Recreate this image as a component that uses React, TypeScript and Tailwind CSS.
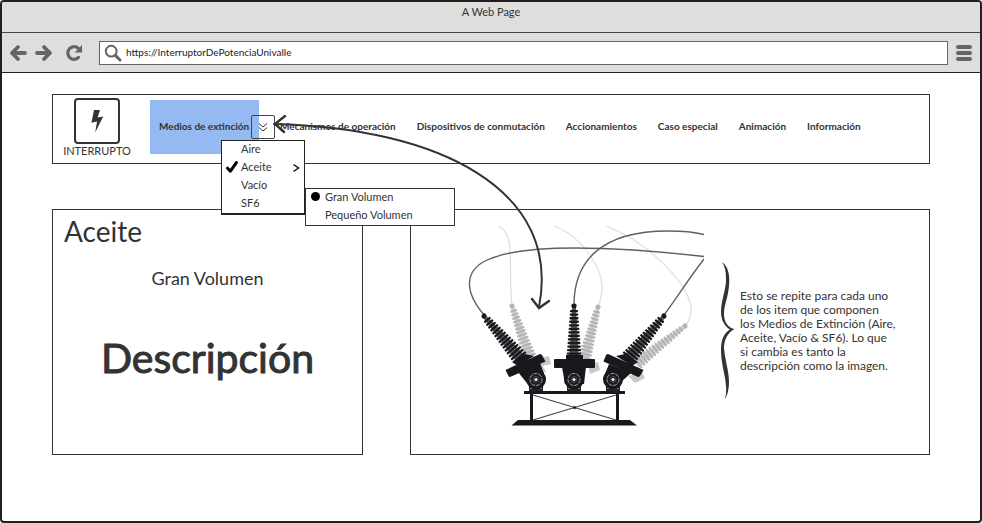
import React from "react";

const NAV_LINKS = [
  "Mecanismos de operación",
  "Dispositivos de conmutación",
  "Accionamientos",
  "Caso especial",
  "Animación",
  "Información",
];

function Toolbar() {
  return (
    <div className="flex h-10 items-center border-b border-[#231f20] bg-[#dededc] pr-2 pl-[7px] text-[#656565]">
      <button type="button" aria-label="Atrás" className="mr-2 h-[18px] w-[18px]">
        <svg viewBox="0 0 18 18" width="18" height="18" fill="none" stroke="currentColor" strokeWidth="3.8" strokeLinecap="round" strokeLinejoin="round">
          <path d="M9 3 L3 9 L9 15" />
          <path d="M4 9 H16" />
        </svg>
      </button>
      <button type="button" aria-label="Adelante" className="mr-3 h-[18px] w-[18px]">
        <svg viewBox="0 0 18 18" width="18" height="18" fill="none" stroke="currentColor" strokeWidth="3.8" strokeLinecap="round" strokeLinejoin="round">
          <path d="M9 3 L15 9 L9 15" />
          <path d="M14 9 H2" />
        </svg>
      </button>
      <button type="button" aria-label="Recargar" className="mr-4 h-[18px] w-[18px]">
        <svg viewBox="0 0 18 18" width="18" height="18" fill="none">
          <path d="M13.6 13.4 A6.3 6.3 0 1 1 13.4 4.4" stroke="currentColor" strokeWidth="3.2" strokeLinecap="round" />
          <path d="M17 1 V8.4 H9.6 Z" fill="currentColor" />
        </svg>
      </button>
      <label className="flex h-6 flex-1 items-center border border-[#656565] bg-white pl-1">
        <svg viewBox="0 0 18 18" width="18" height="18" fill="none" stroke="#656565" strokeLinecap="round">
          <circle cx="7.2" cy="7.2" r="5.4" strokeWidth="2" />
          <path d="M11.6 11.6 L16 16" strokeWidth="3" />
        </svg>
        <input
          type="text"
          aria-label="Dirección"
          defaultValue="https://InterruptorDePotenciaUnivalle"
          className="ml-1 h-5 flex-1 bg-transparent pb-0.5 text-[10px] text-[#222222] outline-none"
        />
      </label>
      <button type="button" aria-label="Menú" className="ml-2 flex w-4 flex-col gap-0.5">
        <span className="h-1 rounded-full bg-[#656565]" />
        <span className="h-1 rounded-full bg-[#656565]" />
        <span className="h-1 rounded-full bg-[#656565]" />
      </button>
    </div>
  );
}

function MediosMenu() {
  return (
    <>
      <ul className="absolute top-10 left-[71px] z-20 w-[84px] border border-b-2 border-[#222222] bg-white text-[11px] leading-4 font-normal text-[#333333]">
        <li className="h-[18px] pl-[19px]"><button type="button">Aire</button></li>
        <li className="flex h-[18px] items-start pr-1 pl-1">
          <svg viewBox="0 0 12 12" width="12" height="12" fill="none" stroke="#000000" strokeWidth="3" strokeLinecap="round" strokeLinejoin="round" className="mt-0.5 mr-[3px]">
            <path d="M1.6 7.2 L4.4 10.2 L10.4 1.6" />
          </svg>
          <button type="button" className="flex-1 text-left">Aceite</button>
          <svg viewBox="0 0 8 10" width="8" height="10" fill="none" stroke="#111111" strokeWidth="1.5" className="mt-1">
            <path d="M1.5 1.5 L6.5 5 L1.5 8.5" />
          </svg>
        </li>
        <li className="h-[18px] pl-[19px]"><button type="button">Vacío</button></li>
        <li className="h-[18px] pl-[19px]"><button type="button">SF6</button></li>
      </ul>
      <ul className="absolute top-[88px] left-[155px] z-20 w-[150px] border border-[#333333] bg-white text-[11px] leading-4 font-normal text-[#333333]">
        <li className="flex h-[18px] items-start pl-[5px]">
          <span className="mt-[3px] mr-[5px] h-[9px] w-[9px] rounded-full bg-black" />
          <button type="button">Gran Volumen</button>
        </li>
        <li className="h-[18px] pl-[19px]"><button type="button">Pequeño Volumen</button></li>
      </ul>
    </>
  );
}

function NavBar() {
  return (
    <header className="flex h-[70px] items-start border border-[#333333] pl-[11px]">
      <div className="mt-[3px] flex w-[66px] flex-col items-center text-[11px] leading-[14px] text-[#333333]">
        <div className="flex h-[46px] w-[46px] items-center justify-center rounded border-2 border-[#333333]">
          <svg viewBox="0 0 14 24" width="14" height="24" fill="#333333">
            <path d="M4 1 H10 L7.6 8.4 L13.2 7.4 L5.2 23.4 L7 12.6 L1.4 13.8 Z" />
          </svg>
        </div>
        INTERRUPTO
      </div>
      <nav className="mt-[5px] ml-5 text-[10px] font-bold text-[#333333]">
        <ul className="flex h-[54px] items-center gap-[21px] whitespace-nowrap">
          <li className="relative flex h-[54px] w-[109px] items-center bg-[#95baf2] pl-[9px]">
            <a href="#medios" className="pb-0.5">Medios de extinción</a>
            <button
              type="button"
              aria-label="Abrir menú"
              className="absolute top-[15px] left-[101px] flex h-6 w-6 items-center justify-center rounded-xs border border-[#444444]"
            >
              <svg viewBox="0 0 10 10" width="10" height="10" fill="none" stroke="#333333" strokeWidth="1">
                <path d="M1 1.5 L5 5 L9 1.5 M1 5.5 L5 9 L9 5.5" />
              </svg>
            </button>
            <MediosMenu />
          </li>
          {NAV_LINKS.map((label) => (
            <li key={label} className="pb-0.5"><a href="#seccion">{label}</a></li>
          ))}
        </ul>
      </nav>
    </header>
  );
}

type StackProps = {
  x1: number;
  y1: number;
  x2: number;
  y2: number;
  from: number;
  to: number;
  color: string;
  core: string;
};

/* Tapered insulator: a core with evenly spaced discs that widen towards the base. */
function Insulator({ x1, y1, x2, y2, from, to, color, core }: StackProps) {
  const length = Math.hypot(x2 - x1, y2 - y1);
  const angle = (Math.atan2(y2 - y1, x2 - x1) * 180) / Math.PI - 90;
  const count = Math.floor(length / 3.7);
  return (
    <g transform={`translate(${x1} ${y1}) rotate(${angle})`} fill={color}>
      <path d={`M-1.8 0 H1.8 L${to / 3.2} ${length} H${-to / 3.2} Z`} fill={core} />
      <ellipse cx="0" cy="0" rx="2.6" ry="2.4" />
      {Array.from({ length: count }, (_, i) => {
        const y = 4 + (i * (length - 4)) / count;
        const w = from + ((to - from) * i) / count;
        return <rect key={i} x={-w / 2} y={y} width={w} height="2.3" rx="0.8" />;
      })}
    </g>
  );
}

function Joint({ cx }: { cx: number }) {
  return (
    <g>
      <path d={`M${cx - 7} 386 H${cx + 7} V392 H${cx - 7} Z`} fill="#26242a" />
      <path d={`M${cx - 6} 388.5 H${cx + 6}`} stroke="#99979b" strokeWidth="0.8" />
      <circle cx={cx} cy="379.5" r="10" fill="#19181d" />
      <circle cx={cx} cy="379.5" r="6" fill="none" stroke="#a5a3a7" strokeWidth="1" strokeDasharray="4 1" />
      <circle cx={cx} cy="379.5" r="3" fill="none" stroke="#5b595e" strokeWidth="0.8" />
      <circle cx={cx} cy="379.5" r="1.5" fill="#ffffff" />
    </g>
  );
}

function Breaker() {
  const dark = "#19181d";
  const pale = "#b4b4b4";
  const darkCore = "#5c5a5f";
  const paleCore = "#d0d0d0";
  return (
    <svg viewBox="466 226 238 200" width="238" height="200" role="img" aria-label="Interruptor de potencia" className="shrink-0">
      <g fill="none" stroke="#dddddd" strokeWidth="1.2">
        <path d="M498 226 C507 230 509 238 510 250 C511 270 510 288 512 306" />
        <path d="M554 226 C582 236 604 270 602 290 Q601 300 598 307" />
        <path d="M606 226 C650 243 686 282 691 306 Q692 318 685 326" />
      </g>
      <Insulator x1={512} y1={306} x2={530} y2={358} from={7} to={14} color={pale} core={paleCore} />
      <Insulator x1={598} y1={307} x2={584} y2={360} from={7} to={14} color={pale} core={paleCore} />
      <Insulator x1={685} y1={326} x2={636} y2={364} from={6} to={14} color={pale} core={paleCore} />
      <g fill="#c8c8c8">
        <path d="M540 358 L549 356 L551 364 L543 366 L546 372 L538 374 Z" />
        <path d="M588 364 L598 362 L600 370 L590 374 Z" />
        <path d="M628 376 L642 372 L645 378 L635 383 Z" />
      </g>
      <g fill="none" stroke="#606060" strokeWidth="1.4">
        <path d="M484 315 C463 290 466 271 485 261 C519 244 600 245 704 256.500" />
        <path d="M574 305 C574 262 600 231 668 231 Q690 231 704 234.500" />
        <path d="M664 315 C678 296 690 277 704 259" />
      </g>
      <Insulator x1={484} y1={316} x2={521} y2={359} from={8} to={17} color={dark} core={darkCore} />
      <Insulator x1={664} y1={316} x2={628} y2={359} from={8} to={17} color={dark} core={darkCore} />
      <Insulator x1={574} y1={306} x2={574} y2={356} from={8} to={15} color={dark} core={darkCore} />
      <g fill={dark}>
        <path d="M512 362 L525 354 L534 356 L518 366 Z" />
        <path d="M638 362 L625 354 L616 356 L632 366 Z" />
        <path d="M566 355 H583 V360 H566 Z" />
        <path d="M505.500 370 L540 354 Q541 354 542 355 L545.500 361.500 L510 377 Q509 377 508.500 376 Z" />
        <path d="M643.500 370 L608 354 Q607 354 606 355 L603.500 361.500 L638 377 Q639 377 640 376 Z" />
        <rect x="554" y="359" width="41" height="9" rx="1" />
        <path d="M518 372 L540 363 L546 379 L536 386 L526 382 Z" />
        <path d="M631 373 L609 364 L603 379 L613 386 L621 382 Z" />
        <path d="M562 367 H586 L584 384 H565 Z" />
      </g>
      <Joint cx={536} />
      <Joint cx={574} />
      <Joint cx={613} />
      <g fill={dark}>
        <rect x="524" y="391" width="101" height="3" />
        <rect x="530" y="393" width="3" height="28" />
        <rect x="616" y="393" width="3" height="28" />
        <path d="M518 420 H630 L637 425.500 H511.500 Z" />
      </g>
      <path d="M533 395 L616 420 M616 395 L533 420" stroke="#444444" strokeWidth="1.1" />
      <circle cx="574.500" cy="407.500" r="1.500" fill={dark} />
    </svg>
  );
}

export default function App() {
  return (
    <div className="relative flex min-h-screen flex-col overflow-hidden rounded border-2 border-[#231f20] bg-white font-['Lato','Liberation_Sans',sans-serif] text-[#333333]">
      <div className="h-[31px] border-b border-[#444444] bg-[#dededc] pt-0.5 text-center text-[11px] leading-4">
        A Web Page
      </div>
      <Toolbar />
      <main className="px-[50px] pt-[21px]">
        <NavBar />
        <div className="mt-[45px] flex gap-[47px]">
          <section className="h-[246px] w-[311px] shrink-0 border border-[#333333] px-[11px]">
            <h1 className="mt-[3px] text-[28px] leading-9">Aceite</h1>
            <h2 className="mt-[17px] text-center text-[18px] leading-6">Gran Volumen</h2>
            <p className="mt-11 text-center text-[41px] leading-[48px] [-webkit-text-stroke:1px_#333333]">Descripción</p>
          </section>
          <section className="flex h-[246px] flex-1 items-start border border-[#333333] pt-4 pl-[55px]">
            <Breaker />
            <svg viewBox="0 0 14 138" width="14" height="138" fill="#333333" className="mt-9 ml-[17px] shrink-0">
              <path d="M1 0 C8 5 9 15 8 24 C7 36 3 43 3 52 C3 61 8 66 13.500 67 C8 70 3 76 3 86 C4 99 8 108 8 120 C8 128 6 134 4 137 C6 130 5 123 4 116 C2 105 0 98 0 87 C0 77 4 70 9 67.500 C4 65 0 58 0 50 C0 40 4 30 5 20 C5 12 5 6 1 0 Z" />
            </svg>
            <p className="mt-[63px] ml-[5px] text-[12px] leading-[14px] whitespace-nowrap">
              Esto se repite para cada uno<br />
              de los item que componen<br />
              los Medios de Extinción (Aire,<br />
              Aceite, Vacío &amp; SF6). Lo que<br />
              si cambia es tanto la<br />
              descripción como la imagen.
            </p>
          </section>
        </div>
      </main>
      <svg
        viewBox="0 0 280 200"
        width="280"
        height="200"
        fill="none"
        stroke="#333333"
        strokeWidth="2"
        strokeLinecap="round"
        className="pointer-events-none absolute top-[113px] left-[268px] z-10"
      >
        <path d="M4 9 C170 13 292 75 269 192" />
        <path d="M15 1 L5 9 L14 17 M262 184 L269 193 L279 186" strokeWidth="2.400" />
      </svg>
    </div>
  );
}
